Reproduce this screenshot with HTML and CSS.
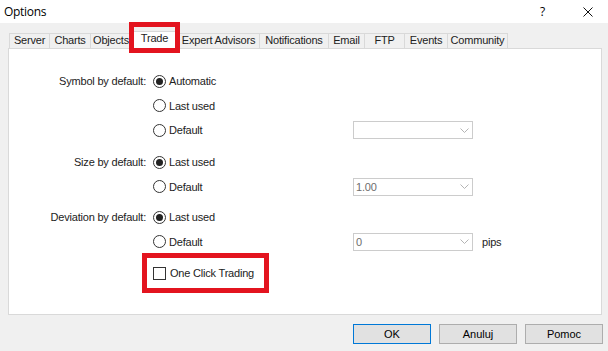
FILE: index.html
```html
<!DOCTYPE html>
<html>
<head>
<meta charset="utf-8">
<link rel="stylesheet" href="styles.css">
</head>
<body>
<div class="titlebar">
  <span class="title">Options</span>
  <span class="help">?</span>
  <span class="close"><svg width="10" height="10" viewBox="0 0 10 10"><path d="M0.5 0.5 L9.5 9.5 M9.5 0.5 L0.5 9.5" stroke="#111" stroke-width="1" fill="none"/></svg></span>
</div>
<div class="dialog">
  <div class="tabs">
    <div class="tab w-server">Server</div>
    <div class="tab w-charts">Charts</div>
    <div class="tab w-objects">Objects</div>
    <div class="tab tab-active w-trade">Trade</div>
    <div class="tab w-ea">Expert Advisors</div>
    <div class="tab w-notif">Notifications</div>
    <div class="tab w-email">Email</div>
    <div class="tab w-ftp">FTP</div>
    <div class="tab w-events">Events</div>
    <div class="tab w-comm">Community</div>
    <div class="mark mark-tab"></div>
  </div>
  <div class="panel">
    <div class="group g1">
      <span class="label">Symbol by default:</span>
      <span class="opt"><span class="radio on"></span>Automatic</span>
      <span class="opt"><span class="radio"></span>Last used</span>
      <span class="opt"><span class="radio"></span>Default</span>
      <span class="combo"><span class="combo-text"></span><svg class="chev" width="9" height="5" viewBox="0 0 9 5"><polyline points="0.5,0.5 4.5,4.5 8.5,0.5" stroke="#b4b4b4" fill="none"/></svg></span>
    </div>
    <div class="group g2">
      <span class="label">Size by default:</span>
      <span class="opt"><span class="radio on"></span>Last used</span>
      <span class="opt"><span class="radio"></span>Default</span>
      <span class="combo"><span class="combo-text">1.00</span><svg class="chev" width="9" height="5" viewBox="0 0 9 5"><polyline points="0.5,0.5 4.5,4.5 8.5,0.5" stroke="#b4b4b4" fill="none"/></svg></span>
    </div>
    <div class="group g3">
      <span class="label">Deviation by default:</span>
      <span class="opt"><span class="radio on"></span>Last used</span>
      <span class="opt"><span class="radio"></span>Default</span>
      <span class="combo"><span class="combo-text">0</span><svg class="chev" width="9" height="5" viewBox="0 0 9 5"><polyline points="0.5,0.5 4.5,4.5 8.5,0.5" stroke="#b4b4b4" fill="none"/></svg></span>
      <span class="unit">pips</span>
    </div>
    <div class="group g4">
      <span class="opt opt-check"><span class="check"></span>One Click Trading</span>
    </div>
    <div class="mark mark-oct"></div>
  </div>
  <div class="buttons">
    <div class="btn btn-default">OK</div>
    <div class="btn">Anuluj</div>
    <div class="btn">Pomoc</div>
  </div>
</div>
</body>
</html>
```

FILE: styles.css
```css
html, body {
  margin: 0;
  padding: 0;
}
body {
  width: 608px;
  height: 351px;
  overflow: hidden;
  background: #f0f0f0;
  font-family: "Liberation Sans", Arial, sans-serif;
  font-size: 11px;
  color: #222222;
}

/* title bar */
.titlebar {
  height: 23px;
  background: #ffffff;
  display: flex;
  align-items: center;
  font-family: "Open Sans", "Noto Sans", sans-serif;
  font-size: 12px;
  color: #000;
}
.title {
  padding-left: 4px;
  letter-spacing: -0.3px;
  flex: 1;
}
.help {
  width: 6px;
  margin-right: 37px;
}
.close {
  display: flex;
  width: 10px;
  height: 10px;
  margin-right: 15px;
}

/* dialog body */
.dialog {
  padding: 10px 0 0 8px;
}

.tabs {
  display: flex;
  align-items: flex-end;
  height: 15px;
  margin-left: 2px;
  position: relative;
  z-index: 1;
}
.tab {
  box-sizing: border-box;
  height: 15px;
  border: 1px solid #d9d9d9;
  border-bottom: none;
  margin-left: -1px;
  background: #f0f0f0;
  text-align: center;
  line-height: 13px;
  letter-spacing: -0.2px;
  white-space: nowrap;
}
.tab-active {
  height: 18px;
  margin-left: -3px;
  margin-right: -2px;
  margin-bottom: -1px;
  background: #ffffff;
  position: relative;
  z-index: 2;
}
.w-server { width: 41px; }
.w-charts { width: 42px; }
.w-objects { width: 42px; }
.w-trade { width: 51px; }
.w-ea { width: 83px; }
.w-notif { width: 70px; }
.w-email { width: 37px; }
.w-ftp { width: 41px; }
.w-events { width: 44px; }
.w-comm { width: 61px; }

.panel {
  box-sizing: border-box;
  width: 594px;
  height: 267px;
  background: #ffffff;
  border: 1px solid #d9d9d9;
  padding-top: 20px;
  position: relative;
}

.group {
  display: grid;
  grid-template-columns: 138px 206px 120px auto;
  grid-auto-rows: 24.5px;
  align-items: center;
  letter-spacing: -0.2px;
}
.g2 { margin-top: 7.5px; }
.g3 { margin-top: 6px; }
.g4 { margin-top: 7px; }

.label {
  grid-column: 1;
  text-align: right;
  padding-right: 1px;
  white-space: nowrap;
}
.opt {
  grid-column: 2;
  display: flex;
  align-items: center;
  padding-left: 6px;
  white-space: nowrap;
}
.radio {
  box-sizing: border-box;
  width: 13px;
  height: 13px;
  border: 1px solid #333333;
  border-radius: 50%;
  margin-right: 3px;
  display: flex;
  align-items: center;
  justify-content: center;
  flex: none;
}
.radio.on::after {
  content: "";
  width: 7px;
  height: 7px;
  border-radius: 50%;
  background: #222222;
}
.check {
  box-sizing: border-box;
  width: 13px;
  height: 13px;
  border: 1px solid #333333;
  margin-right: 4px;
  flex: none;
}

.combo {
  grid-column: 3;
  box-sizing: border-box;
  height: 18px;
  border: 1px solid #cccccc;
  background: #ffffff;
  display: flex;
  align-items: center;
  padding: 0 3px 0 2px;
  color: #6d6d6d;
}
.combo-text {
  flex: 1;
}
.chev {
  display: block;
}
.unit {
  grid-column: 4;
  padding-left: 9px;
}

/* red annotation boxes */
.mark {
  position: absolute;
  box-sizing: border-box;
  border: 5px solid #e3141f;
  z-index: 5;
}
.mark-tab {
  left: 119px;
  top: -11px;
  width: 51px;
  height: 31px;
}
.mark-oct {
  left: 133px;
  top: 204px;
  width: 127px;
  height: 40px;
}

/* buttons */
.buttons {
  display: flex;
  justify-content: flex-end;
  gap: 8px;
  margin-top: 9px;
  padding-right: 5px;
}
.btn {
  box-sizing: border-box;
  width: 78px;
  height: 20px;
  border: 1px solid #adadad;
  background: #e1e1e1;
  text-align: center;
  line-height: 18px;
  color: #000;
}
.btn-default {
  border-color: #0078d7;
}
```
